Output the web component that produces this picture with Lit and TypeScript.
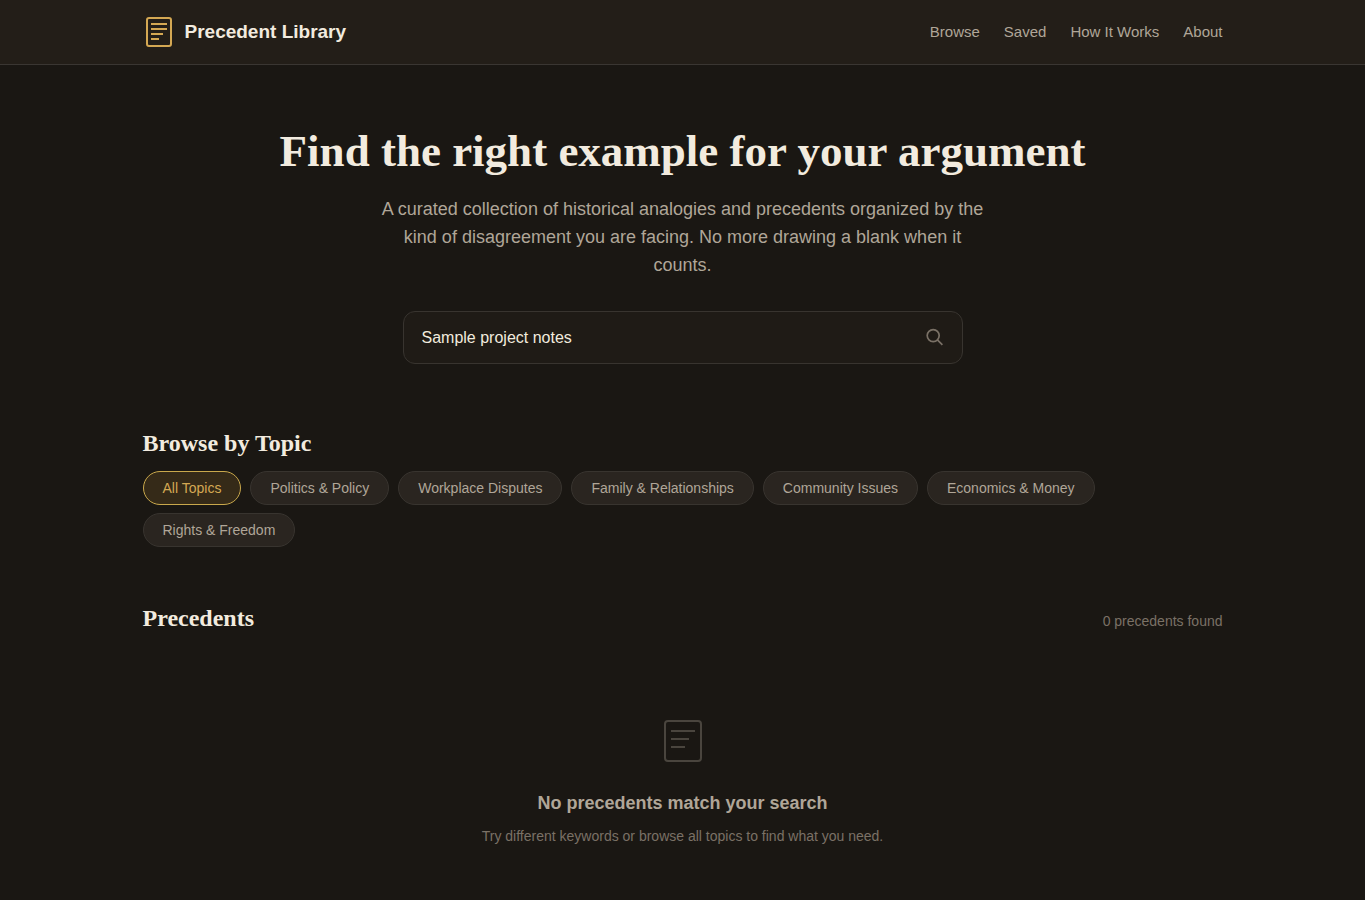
import { LitElement, html, css } from "lit";
import { customElement, state } from "lit/decorators.js";

const NAV = ["Browse", "Saved", "How It Works", "About"];
const TOPICS = [
  "All Topics",
  "Politics & Policy",
  "Workplace Disputes",
  "Family & Relationships",
  "Community Issues",
  "Economics & Money",
  "Rights & Freedom",
];

@customElement("app-root")
export class AppRoot extends LitElement {
  @state() private topic = TOPICS[0];
  @state() private query = "Sample project notes";

  static styles = css`
    :host {
      display: block;
      min-height: 100vh;
      background: #1a1713;
      color: #f2ebdf;
      font-family: "Liberation Sans", Arial, sans-serif;
      font-size: 16px;
      line-height: 24px;
    }
    * {
      box-sizing: border-box;
    }
    h1,
    h2,
    h3,
    p {
      margin: 0;
    }
    .wrap {
      max-width: 1128px;
      margin: 0 auto;
      padding: 0 24px;
    }
    .top {
      background: #231e18;
      border-bottom: 1px solid #3a3632;
    }
    .bar {
      display: flex;
      align-items: center;
      justify-content: space-between;
      padding-top: 16px;
      padding-bottom: 16px;
    }
    .brand {
      display: flex;
      align-items: center;
      gap: 10px;
      color: #f2ebdf;
      font-size: 19px;
      font-weight: 700;
      text-decoration: none;
    }
    .brand svg,
    .blank svg,
    .go svg {
      display: block;
    }
    .nav {
      display: flex;
      gap: 24px;
    }
    .nav a {
      color: #b0a698;
      font-size: 15px;
      text-decoration: none;
    }
    .hero {
      display: flex;
      flex-direction: column;
      align-items: center;
      padding-top: 60px;
      text-align: center;
    }
    h1,
    h2 {
      font-family: "Liberation Serif", "Times New Roman", serif;
      font-weight: 700;
    }
    h1 {
      font-size: 45px;
      line-height: 52px;
    }
    .lead {
      max-width: 608px;
      margin-top: 18px;
      color: #b0a698;
      font-size: 18px;
      line-height: 28px;
    }
    .search {
      display: flex;
      align-items: center;
      width: 100%;
      max-width: 560px;
      margin-top: 32px;
      padding: 0 18px;
      background: #1f1b16;
      border: 1px solid #38342f;
      border-radius: 12px;
    }
    .search input {
      flex: 1;
      min-width: 0;
      height: 51px;
      padding: 0;
      border: 0;
      outline: 0;
      background: none;
      color: #f2ebdf;
      font: inherit;
    }
    .go {
      padding: 0;
      border: 0;
      background: none;
      color: #7a7166;
      cursor: pointer;
    }
    h2 {
      font-size: 24px;
      line-height: 30px;
    }
    .topics {
      padding-top: 64px;
    }
    .pills {
      display: flex;
      flex-wrap: wrap;
      gap: 8px 9px;
      margin-top: 13px;
    }
    .pill {
      height: 34px;
      padding: 0 19px;
      border: 1px solid #38342f;
      border-radius: 17px;
      background: #2a2520;
      color: #b0a698;
      font: inherit;
      font-size: 14px;
      cursor: pointer;
    }
    .pill.on {
      border-color: #c9a84c;
      background: #352a18;
      color: #d4a853;
    }
    .results {
      display: flex;
      align-items: baseline;
      justify-content: space-between;
      padding-top: 56px;
    }
    .count {
      color: #7a7166;
      font-size: 14px;
    }
    .blank {
      display: flex;
      flex-direction: column;
      align-items: center;
      padding-top: 84px;
      padding-bottom: 48px;
      color: #7a7166;
      text-align: center;
    }
    .blank h3 {
      margin-top: 24px;
      color: #b0a698;
      font-size: 18px;
      line-height: 28px;
    }
    .blank p {
      margin-top: 7px;
      font-size: 14px;
    }
  `;

  render() {
    return html`
      <header class="top">
        <div class="wrap bar">
          <a class="brand" href="#">
            <svg width="32" height="32" viewBox="0 0 32 32" fill="none" stroke="#d4a853" stroke-width="2" aria-hidden="true">
              <rect x="4" y="2" width="24" height="28" rx="2" />
              <path d="M8 8h16M8 13h16M8 18h12M8 23h8" />
            </svg>
            Precedent Library
          </a>
          <nav class="nav">${NAV.map((n) => html`<a href="#">${n}</a>`)}</nav>
        </div>
      </header>
      <main class="wrap">
        <section class="hero">
          <h1>Find the right example for your argument</h1>
          <p class="lead">
            A curated collection of historical analogies and precedents organized by the kind of
            disagreement you are facing. No more drawing a blank when it counts.
          </p>
          <form class="search" role="search" @submit=${(e: Event) => e.preventDefault()}>
            <input
              type="text"
              aria-label="Search precedents"
              .value=${this.query}
              @input=${(e: Event) => (this.query = (e.target as HTMLInputElement).value)}
            />
            <button class="go" type="submit" aria-label="Search">
              <svg width="20" height="20" viewBox="0 0 20 20" fill="none" stroke="currentColor" stroke-width="1.7" aria-hidden="true">
                <circle cx="9.2" cy="7.6" r="6" />
                <path d="M13.4 11.8L18.4 16.8" />
              </svg>
            </button>
          </form>
        </section>
        <section class="topics">
          <h2>Browse by Topic</h2>
          <div class="pills">
            ${TOPICS.map(
              (t) => html`<button
                type="button"
                class="pill ${t === this.topic ? "on" : ""}"
                aria-pressed=${t === this.topic}
                @click=${() => (this.topic = t)}
              >${t}</button>`
            )}
          </div>
        </section>
        <section>
          <div class="results">
            <h2>Precedents</h2>
            <span class="count">0 precedents found</span>
          </div>
          <div class="blank">
            <svg width="48" height="48" viewBox="0 0 48 48" fill="none" stroke="#4a453e" stroke-width="2" aria-hidden="true">
              <rect x="6" y="4" width="36" height="40" rx="3" />
              <path d="M12 14h24M12 22h18M12 30h14" />
            </svg>
            <h3>No precedents match your search</h3>
            <p>Try different keywords or browse all topics to find what you need.</p>
          </div>
        </section>
      </main>
    `;
  }
}
